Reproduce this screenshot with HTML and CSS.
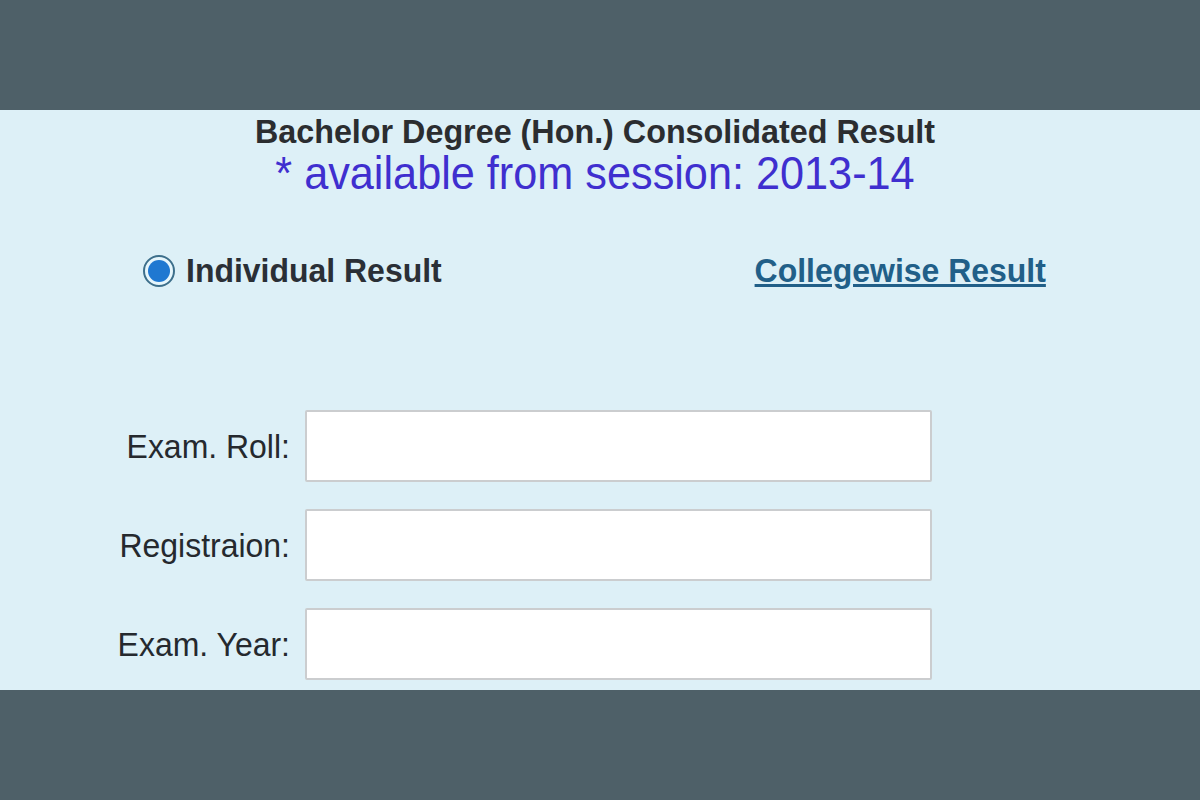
FILE: index.html
```html
<!DOCTYPE html>
<html lang="en">

<head>
    <meta charset="UTF-8" />
    <meta name="viewport" content="width=device-width, initial-scale=1.0" />
    <title>Consolidated Result</title>
    <link rel="stylesheet" href="styles.css">
</head>

<body>
    <div class="band"></div>
    <div class="panel">
        <div class="heading">
            <h1>Bachelor Degree (Hon.) Consolidated Result</h1>
            <p class="session">* available from session: 2013-14</p>
        </div>
        <div class="result-type">
            <label class="radio-option">
                <span class="radio"><span class="radio-dot"></span></span>
                <span class="radio-text">Individual Result</span>
            </label>
            <a href="#" class="college-link">Collegewise Result</a>
        </div>
        <form class="result-form">
            <div class="form-row">
                <label for="roll">Exam. Roll:</label>
                <input type="text" id="roll">
            </div>
            <div class="form-row">
                <label for="reg">Registraion:</label>
                <input type="text" id="reg">
            </div>
            <div class="form-row">
                <label for="year">Exam. Year:</label>
                <input type="text" id="year">
            </div>
        </form>
    </div>
    <div class="band"></div>
</body>

</html>
```

FILE: styles.css
```css
body {
    margin: 0;
    font-family: "Liberation Sans", Arial, sans-serif;
    background-color: #4e6068;
}

.band {
    height: 110px;
    background-color: #4e6068;
}

.panel {
    height: 580px;
    background-color: #ddf0f7;
    box-sizing: border-box;
    padding-top: 2px;
}

.heading {
    text-align: center;
    padding-right: 10px;
}

.heading h1 {
    margin: 0;
    font-size: 34px;
    line-height: 39px;
    color: #2b2d30;
    transform: scaleX(0.95);
}

.session {
    margin: 0;
    font-size: 46px;
    line-height: 45px;
    color: #3f2fcf;
    transform: scaleX(0.94);
}

.result-type {
    display: flex;
    justify-content: space-between;
    align-items: center;
    margin: 55px 154px 0 143px;
}

.radio-option {
    display: flex;
    align-items: center;
    gap: 11px;
    font-size: 34px;
    font-weight: bold;
    color: #2a2f36;
}

.radio-text {
    display: inline-block;
    transform: scaleX(0.94);
    transform-origin: left center;
}

.radio {
    width: 28px;
    height: 28px;
    border: 2px solid #3d6f8b;
    border-radius: 50%;
    background-color: #e6f6fc;
    display: flex;
    align-items: center;
    justify-content: center;
}

.radio-dot {
    width: 22px;
    height: 22px;
    border-radius: 50%;
    background-color: #1f78d1;
}

.college-link {
    display: inline-block;
    font-size: 34px;
    font-weight: bold;
    color: #215f88;
    transform: scaleX(0.94);
    transform-origin: right center;
}

.result-form {
    margin-top: 120px;
    display: flex;
    flex-direction: column;
    gap: 27px;
}

.form-row {
    display: flex;
    align-items: center;
}

.form-row label {
    width: 305px;
    text-align: right;
    font-size: 34px;
    color: #25292e;
    padding-right: 16px;
    box-sizing: border-box;
    transform: scaleX(0.94);
    transform-origin: right center;
}

.form-row input {
    width: 627px;
    height: 72px;
    box-sizing: border-box;
    border: 2px solid #cbcdcf;
    border-radius: 2px;
    background-color: #ffffff;
    margin: 0;
}
```
